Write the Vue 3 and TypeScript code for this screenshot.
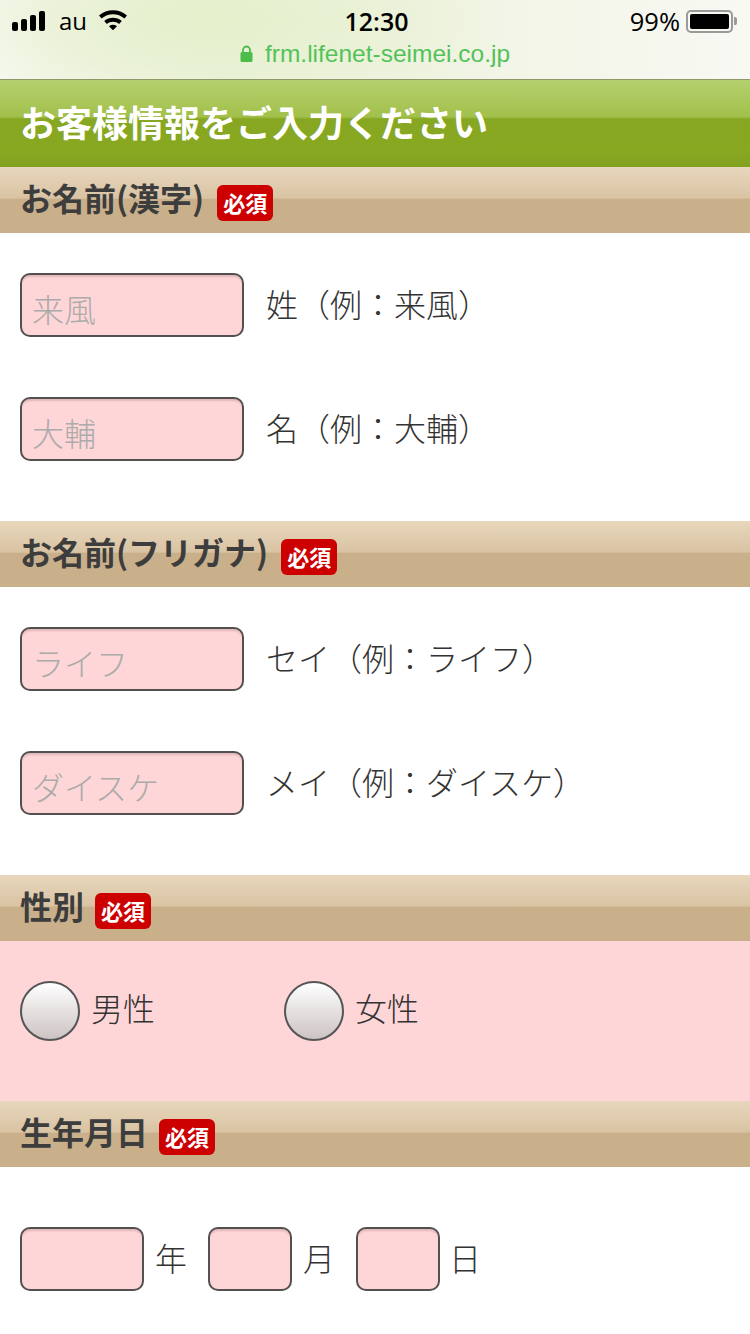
<script setup lang="ts">
interface Field { placeholder: string; label: string }
const kanji: Field[] = [
  { placeholder: '来風', label: '姓（例：来風）' },
  { placeholder: '大輔', label: '名（例：大輔）' },
]
const kana: Field[] = [
  { placeholder: 'ライフ', label: 'セイ（例：ライフ）' },
  { placeholder: 'ダイスケ', label: 'メイ（例：ダイスケ）' },
]
</script>

<template>
  <div class="page">
    <header class="status">
      <div class="status-row">
        <div class="status-left">
          <span class="signal"><i class="b1"></i><i class="b2"></i><i class="b3"></i><i class="b4"></i></span>
          <span class="carrier">au</span>
          <svg class="wifi" width="30" height="22" viewBox="0 0 30 22">
            <path d="M1 7.5C8.8.4 21.2.4 29 7.5l-2.6 2.9C20 4.7 10 4.7 3.600 10.400z" fill="#000" />
            <path d="M6.200 13C11.200 8.600 18.800 8.600 23.800 13l-2.700 3C17.600 13 12.400 13 8.900 16z" fill="#000" />
            <path d="M11 18.200c2.400-1.800 5.600-1.800 8 0L15 22.300z" fill="#000" />
          </svg>
        </div>
        <div class="time">12:30</div>
        <div class="status-right">
          <span class="pct">99%</span>
          <span class="battery"><span class="fill"></span></span>
          <span class="nub"></span>
        </div>
      </div>
      <div class="url">
        <svg class="lock" width="13" height="18" viewBox="0 0 13 18">
          <path d="M3 8V5a3.500 3.500 0 0 1 7 0v3" fill="none" stroke="#4cbc4a" stroke-width="1.800" />
          <rect x="0.500" y="7" width="12" height="10" rx="1.500" fill="#4cbc4a" />
        </svg>
        <span>frm.lifenet-seimei.co.jp</span>
      </div>
    </header>

    <h1 class="title">お客様情報をご入力ください</h1>

    <h2 class="head wide"><span>お名前(漢字)</span><em class="req">必須</em></h2>
    <section class="body">
      <div v-for="f in kanji" :key="f.label" class="row">
        <div class="input ph">{{ f.placeholder }}</div>
        <span class="label">{{ f.label }}</span>
      </div>
    </section>

    <h2 class="head wide"><span>お名前(フリガナ)</span><em class="req">必須</em></h2>
    <section class="body">
      <div v-for="f in kana" :key="f.label" class="row">
        <div class="input ph">{{ f.placeholder }}</div>
        <span class="label">{{ f.label }}</span>
      </div>
    </section>

    <h2 class="head"><span>性別</span><em class="req">必須</em></h2>
    <section class="radios">
      <label class="radio male"><i class="dot"></i><span>男性</span></label>
      <label class="radio"><i class="dot"></i><span>女性</span></label>
    </section>

    <h2 class="head"><span>生年月日</span><em class="req">必須</em></h2>
    <section class="dates">
      <div class="input year"></div><span class="unit">年</span>
      <div class="input small"></div><span class="unit">月</span>
      <div class="input small"></div><span class="unit day">日</span>
    </section>
  </div>
</template>

<style>
html, body { margin: 0; background: #fff; }
</style>

<style scoped>
.page {
  width: 750px;
  height: 1334px;
  overflow: hidden;
  background: #fff;
  color: #333;
  font-family: "Noto Sans CJK JP", "Liberation Sans", sans-serif;
}
.status {
  box-sizing: border-box;
  height: 80px;
  border-bottom: 1px solid #8b9a67;
  background:
    radial-gradient(ellipse 300px 110px at 210px 20px, #e4efcb 0%, rgba(232, 241, 210, .7) 55%, rgba(244, 246, 233, 0) 100%),
    linear-gradient(90deg, #f8f9f4 0%, #eef3df 30%, #f1f4e4 60%, #f8f9f3 100%);
}
.status-row {
  position: relative;
  display: flex;
  justify-content: space-between;
  align-items: center;
  height: 42px;
  padding: 0 12px;
  color: #000;
  font-family: "Open Sans", sans-serif;
}
.status-left { display: flex; align-items: center; }
.signal { display: flex; align-items: flex-end; gap: 3px; width: 33px; height: 20px; }
.signal i { width: 6px; background: #000; border-radius: 2px; }
.b1 { height: 9px; } .b2 { height: 12px; } .b3 { height: 16px; } .b4 { height: 20px; }
.carrier { margin-left: 14px; font-size: 24px; line-height: 42px; }
.wifi { margin-left: 11px; margin-top: -4px; }
.time {
  position: absolute;
  left: 3px;
  right: 0;
  text-align: center;
  font-size: 25px;
  font-weight: 600;
}
.status-right { display: flex; align-items: center; }
.pct { font-size: 25.500px; margin-right: 6px; }
.battery {
  box-sizing: border-box;
  display: block;
  width: 47px;
  height: 23px;
  padding: 2px;
  border: 2px solid #9a9a9a;
  border-radius: 5px;
}
.fill { display: block; height: 100%; background: #000; border-radius: 2px; }
.nub { width: 3px; height: 8px; margin-left: 1px; margin-right: 1px; background: #9a9a9a; border-radius: 0 2px 2px 0; }
.url {
  display: flex;
  justify-content: center;
  align-items: center;
  gap: 12px;
  height: 24px;
  color: #53c25a;
  font-size: 24.500px;
  line-height: 24px;
  font-family: "Liberation Sans", sans-serif;
}
.title {
  margin: 0;
  height: 87px;
  padding-left: 20px;
  color: #fff;
  font-size: 36px;
  font-weight: 700;
  line-height: 83px;
  background: linear-gradient(180deg, #b5d06f 0%, #a2c04b 42%, #87a722 45%, #88a822 80%, #83a31f 100%);
}
.head {
  display: flex;
  align-items: center;
  box-sizing: border-box;
  height: 66px;
  margin: 0;
  padding: 0 0 0 20px;
  font-size: 32px;
  font-weight: 700;
  color: #3d3d3d;
  background: linear-gradient(180deg, #e8d7bd 0%, #d9c3a3 47%, #c9b08b 49%, #c9b08b 100%);
}
.head > span { position: relative; top: -3px; line-height: 66px; }
.req {
  display: block;
  width: 56px;
  height: 36px;
  margin: 6px 0 0 11px;
  border-radius: 6px;
  background: #cc0000;
  color: #fff;
  font-size: 22px;
  font-style: normal;
  font-weight: 700;
  line-height: 35px;
  text-align: center;
}
.wide .req { margin-left: 13px; }
.body {
  display: flex;
  flex-direction: column;
  gap: 60px;
  padding: 40px 0 60px 20px;
}
.row { display: flex; align-items: center; }
.input {
  box-sizing: border-box;
  height: 64px;
  border: 2px solid #555050;
  border-radius: 10px;
  background: #ffd6d7;
  box-shadow: inset 0 3px 2px -1px rgba(120, 80, 80, .22);
}
.ph {
  width: 224px;
  padding: 10px 0 0 10px;
  color: #ababab;
  font-size: 32px;
  font-weight: 300;
  line-height: 46px;
}
.label { margin-left: 22px; font-size: 32px; font-weight: 300; position: relative; top: -2px; }
.radios {
  display: flex;
  box-sizing: border-box;
  height: 160px;
  padding: 40px 0 0 20px;
  background: #ffd6d7;
}
.radio { display: flex; align-items: flex-start; font-size: 32px; font-weight: 300; line-height: 52px; }
.male { width: 264px; }
.dot {
  box-sizing: border-box;
  display: block;
  width: 60px;
  height: 60px;
  margin-right: 11px;
  border: 2px solid #555;
  border-radius: 50%;
  background: linear-gradient(180deg, #fff 0%, #cdc3c3 100%);
}
.dates { display: flex; align-items: center; padding: 60px 0 0 20px; }
.year { width: 124px; }
.small { width: 84px; }
.unit { position: relative; top: -2px; width: 32px; font-size: 32px; font-weight: 300; margin-left: 11px; margin-right: 21px; }
.day { margin-left: 9px; }
</style>
